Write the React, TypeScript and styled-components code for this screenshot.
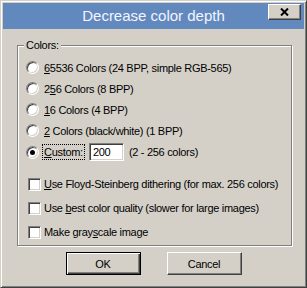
import styled, { createGlobalStyle } from "styled-components";

const GlobalStyle = createGlobalStyle`
  body {
    margin: 0;
    background: #d4d0c8;
    font-family: "Liberation Sans", Arial, sans-serif;
  }
`;

const Window = styled.div`
  width: 307px;
  height: 288px;
  box-sizing: border-box;
  background: #d4d0c8;
  border: 1px solid;
  border-color: #d4d0c8 #404040 #404040 #d4d0c8;
  box-shadow: inset 1px 1px 0 #fff, inset -1px -1px 0 #808080;
  padding: 2px;
  display: flex;
  flex-direction: column;
`;

const TitleBar = styled.div`
  height: 26px;
  background: #6289be;
  display: grid;
  grid-template-columns: 1fr auto 1fr;
  align-items: center;
`;

const Title = styled.div`
  grid-column: 2;
  color: #f4f4ff;
  font-size: 15px;
  line-height: 26px;
  white-space: nowrap;
`;

const CloseButton = styled.div`
  grid-column: 3;
  justify-self: end;
  align-self: start;
  margin: 1px 3px 0 0;
  width: 33px;
  height: 16px;
  box-sizing: border-box;
  background: #d4d0c8;
  border: 1px solid;
  border-color: #fff #404040 #404040 #fff;
  box-shadow: inset -1px -1px 0 #808080;
  display: flex;
  align-items: center;
  justify-content: center;
`;

const Body = styled.div`
  flex: 1;
  padding: 16px 12px 0 14px;
  font-size: 11px;
  letter-spacing: -0.3px;
  color: #000;
`;

const GroupBox = styled.div`
  position: relative;
  height: 201px;
  box-sizing: border-box;
  border: 1px solid #808080;
  box-shadow: inset 1px 1px 0 #fff, 1px 1px 0 #fff;
  padding: 11px 0 0 8px;
  display: flex;
  flex-direction: column;
`;

const Legend = styled.span`
  position: absolute;
  top: -7px;
  left: 6px;
  padding: 0 2px;
  background: #d4d0c8;
  line-height: 13px;
`;

const Row = styled.div<{ $h: number; $gap?: number }>`
  height: ${(p) => p.$h}px;
  margin-top: ${(p) => p.$gap || 0}px;
  display: flex;
  align-items: center;
  white-space: nowrap;
`;

const Radio = styled.span<{ $checked?: boolean }>`
  width: 13px;
  height: 13px;
  box-sizing: border-box;
  border-radius: 50%;
  background: #fff;
  border: 1px solid;
  border-color: #808080 #fff #fff #808080;
  box-shadow: inset 1px 1px 0 #404040, inset -1px -1px 0 #d4d0c8;
  margin-right: 5px;
  display: flex;
  align-items: center;
  justify-content: center;
  &::after {
    content: "";
    display: ${(p) => (p.$checked ? "block" : "none")};
    width: 5px;
    height: 5px;
    border-radius: 50%;
    background: #000;
  }
`;

const Check = styled.span`
  width: 13px;
  height: 13px;
  box-sizing: border-box;
  background: #fff;
  border: 1px solid;
  border-color: #808080 #fff #fff #808080;
  box-shadow: inset 1px 1px 0 #404040, inset -1px -1px 0 #d4d0c8;
  margin: 0 3px 0 2px;
`;

const FocusLabel = styled.span`
  outline: 1px dotted #000;
  outline-offset: 0;
  padding: 0 1px;
  margin-left: -1px;
  line-height: 14px;
`;

const TextBox = styled.div`
  width: 35px;
  height: 18px;
  box-sizing: border-box;
  margin: 0 5px 0 5px;
  background: #fff;
  border: 1px solid;
  border-color: #808080 #fff #fff #808080;
  box-shadow: inset 1px 1px 0 #404040, inset -1px -1px 0 #d4d0c8;
  padding: 0 3px;
  line-height: 16px;
`;

const ButtonRow = styled.div`
  margin-top: 6px;
  display: flex;
  justify-content: center;
  gap: 26px;
  padding-right: 2px;
`;

const Button = styled.div<{ $default?: boolean }>`
  width: 75px;
  height: 23px;
  box-sizing: border-box;
  background: #d4d0c8;
  display: flex;
  align-items: center;
  justify-content: center;
  border: 1px solid;
  border-color: ${(p) => (p.$default ? "#000" : "#fff #404040 #404040 #fff")};
  box-shadow: ${(p) =>
    p.$default
      ? "inset 1px 1px 0 #fff, inset -1px -1px 0 #404040, inset -2px -2px 0 #808080"
      : "inset -1px -1px 0 #808080"};
`;

export default function App() {
  return (
    <>
      <GlobalStyle />
      <Window>
        <TitleBar>
          <Title>Decrease color depth</Title>
          <CloseButton>
            <svg width="9" height="8" viewBox="0 0 9 8">
              <path d="M1 0.5 L8 7.5 M8 0.5 L1 7.5" stroke="#000" strokeWidth="2" />
            </svg>
          </CloseButton>
        </TitleBar>
        <Body>
          <GroupBox>
            <Legend>Colors:</Legend>
            <Row $h={21}>
              <Radio />
              <span>
                <u>6</u>5536 Colors (24 BPP, simple RGB-565)
              </span>
            </Row>
            <Row $h={21}>
              <Radio />
              <span>
                2<u>5</u>6 Colors (8 BPP)
              </span>
            </Row>
            <Row $h={21}>
              <Radio />
              <span>
                <u>1</u>6 Colors (4 BPP)
              </span>
            </Row>
            <Row $h={21}>
              <Radio />
              <span>
                <u>2</u> Colors (black/white) (1 BPP)
              </span>
            </Row>
            <Row $h={22}>
              <Radio $checked />
              <FocusLabel>
                <u>C</u>ustom:
              </FocusLabel>
              <TextBox>200</TextBox>
              <span>(2 - 256 colors)</span>
            </Row>
            <Row $h={24} $gap={9}>
              <Check />
              <span>
                <u>U</u>se Floyd-Steinberg dithering (for max. 256 colors)
              </span>
            </Row>
            <Row $h={24}>
              <Check />
              <span>
                Use <u>b</u>est color quality (slower for large images)
              </span>
            </Row>
            <Row $h={24}>
              <Check />
              <span>
                Make gray<u>s</u>cale image
              </span>
            </Row>
          </GroupBox>
          <ButtonRow>
            <Button $default>OK</Button>
            <Button>Cancel</Button>
          </ButtonRow>
        </Body>
      </Window>
    </>
  );
}
